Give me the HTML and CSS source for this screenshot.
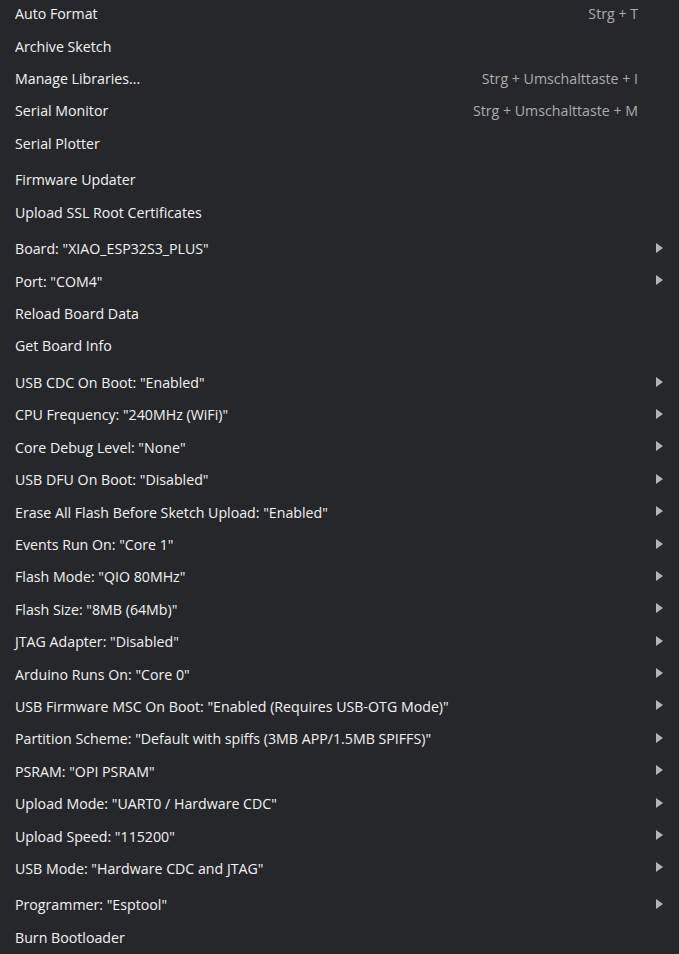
FILE: index.html
```html
<!DOCTYPE html>
<html lang="de">
<head>
<meta charset="utf-8">
<title>Tools</title>
<link rel="stylesheet" href="styles.css">
</head>
<body>
<ul class="menu">
  <li class="item"><span class="label">Auto Format</span><span class="key">Strg + T</span></li>
  <li class="item"><span class="label">Archive Sketch</span></li>
  <li class="item"><span class="label">Manage Libraries...</span><span class="key">Strg + Umschalttaste + I</span></li>
  <li class="item"><span class="label">Serial Monitor</span><span class="key">Strg + Umschalttaste + M</span></li>
  <li class="item"><span class="label">Serial Plotter</span></li>
  <li class="sep"></li>
  <li class="item"><span class="label">Firmware Updater</span></li>
  <li class="item"><span class="label">Upload SSL Root Certificates</span></li>
  <li class="sep"></li>
  <li class="item sub"><span class="label">Board: "XIAO_ESP32S3_PLUS"</span></li>
  <li class="item sub"><span class="label">Port: "COM4"</span></li>
  <li class="item"><span class="label">Reload Board Data</span></li>
  <li class="item"><span class="label">Get Board Info</span></li>
  <li class="sep"></li>
  <li class="item sub"><span class="label">USB CDC On Boot: "Enabled"</span></li>
  <li class="item sub"><span class="label">CPU Frequency: "240MHz (WiFi)"</span></li>
  <li class="item sub"><span class="label">Core Debug Level: "None"</span></li>
  <li class="item sub"><span class="label">USB DFU On Boot: "Disabled"</span></li>
  <li class="item sub"><span class="label">Erase All Flash Before Sketch Upload: "Enabled"</span></li>
  <li class="item sub"><span class="label">Events Run On: "Core 1"</span></li>
  <li class="item sub"><span class="label">Flash Mode: "QIO 80MHz"</span></li>
  <li class="item sub"><span class="label">Flash Size: "8MB (64Mb)"</span></li>
  <li class="item sub"><span class="label">JTAG Adapter: "Disabled"</span></li>
  <li class="item sub"><span class="label">Arduino Runs On: "Core 0"</span></li>
  <li class="item sub"><span class="label">USB Firmware MSC On Boot: "Enabled (Requires USB-OTG Mode)"</span></li>
  <li class="item sub"><span class="label">Partition Scheme: "Default with spiffs (3MB APP/1.5MB SPIFFS)"</span></li>
  <li class="item sub"><span class="label">PSRAM: "OPI PSRAM"</span></li>
  <li class="item sub"><span class="label">Upload Mode: "UART0 / Hardware CDC"</span></li>
  <li class="item sub"><span class="label">Upload Speed: "115200"</span></li>
  <li class="item sub"><span class="label">USB Mode: "Hardware CDC and JTAG"</span></li>
  <li class="sep"></li>
  <li class="item sub"><span class="label">Programmer: "Esptool"</span></li>
  <li class="item"><span class="label">Burn Bootloader</span></li>
</ul>
</body>
</html>
```

FILE: styles.css
```css
html, body {
  margin: 0;
  padding: 0;
  background: #26272b;
  height: 100%;
  overflow: hidden;
}

.menu {
  list-style: none;
  margin: -2.5px 0 0 0;
  padding: 0;
  font-family: "Segoe UI", "Open Sans", "Noto Sans", sans-serif;
  font-size: 14.2px;
  color: #f2f2f2;
}

.item {
  position: relative;
  display: flex;
  align-items: center;
  justify-content: space-between;
  height: 32.4px;
  padding: 0 41px 0 15px;
  white-space: nowrap;
}

.sep {
  height: 4.2px;
}

.key {
  color: #acacac;
}

.sub::after {
  content: "";
  position: absolute;
  right: 16px;
  top: 50%;
  margin-top: -6px;
  border-style: solid;
  border-width: 5px 0 5px 7px;
  border-color: transparent transparent transparent #b4b4b4;
}
```
